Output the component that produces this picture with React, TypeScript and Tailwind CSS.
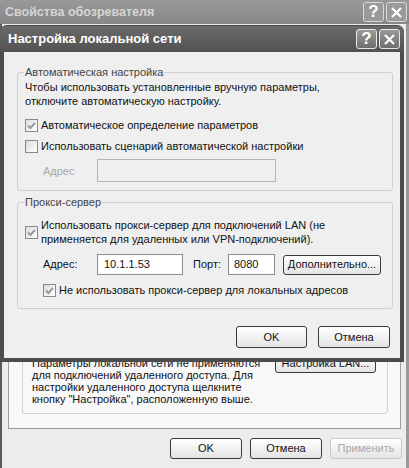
import React from 'react';

const font = { fontFamily: '"Liberation Sans", Arial, sans-serif' };

const CheckBox: React.FC<{ checked?: boolean }> = ({ checked }) => (
  <span className="w-[13px] h-[13px] shrink-0 border border-[#8a8a8a] bg-linear-to-br from-[#dcdcdc] to-white flex items-center justify-center">
    {checked && (
      <svg width="11" height="11" viewBox="0 0 11 11">
        <polyline points="2,5.5 4.4,8 9,2.8" fill="none" stroke="#9a9a9a" strokeWidth="2" />
      </svg>
    )}
  </span>
);

const Button: React.FC<{ children: React.ReactNode; className?: string; disabled?: boolean }> = ({
  children,
  className = '',
  disabled,
}) => (
  <div
    className={`flex items-center justify-center whitespace-nowrap rounded-[3px] border bg-linear-to-b from-white to-[#e4e4e4] text-[11px] ${
      disabled ? 'border-[#c8c8c8] text-[#a8a8a8]' : 'border-[#3a3a3a] text-[#111]'
    } ${className}`}
  >
    {children}
  </div>
);

const TitleButtons: React.FC<{ dim?: boolean }> = ({ dim }) => {
  const box = dim
    ? 'border-[#d8d8d8] bg-[#9a9a9a]'
    : 'border-[#e8e8e8] bg-linear-to-b from-[#9a9a9a] to-[#6e6e6e]';
  return (
    <div className="flex gap-[2px]">
      <div className={`w-[21px] h-[20px] rounded-[3px] border flex items-center justify-center text-white font-bold text-[17px] ${box}`}>
        ?
      </div>
      <div className={`w-[21px] h-[20px] rounded-[3px] border flex items-center justify-center ${box}`}>
        <svg width="13" height="13" viewBox="0 0 13 13">
          <path d="M2 2 L11 11 M11 2 L2 11" stroke="white" strokeWidth="2.2" />
        </svg>
      </div>
    </div>
  );
};

export default function App() {
  return (
    <div style={font} className="relative w-[409px] h-[468px] overflow-hidden bg-[#ececec] flex flex-col text-[#111]">
      {/* Outer window title */}
      <div className="h-[24px] shrink-0 bg-linear-to-b from-[#999] to-[#878787] flex items-center justify-between pl-[5px] pr-[2px]">
        <span className="text-[12.5px] font-bold text-[#d6d6d6]">Свойства обозревателя</span>
        <TitleButtons dim />
      </div>

      {/* Outer window body */}
      <div className="flex-1 flex flex-col border-l-[2px] border-l-[#5a5a5a] border-r-[3px] border-r-[#9a9a9a]">
        <div className="flex-1 mt-[30px] ml-[6px] mr-[5px] flex flex-col justify-end pb-[14px] bg-[#f8f8f8] border border-[#9c9c9c]">
          <div className="flex-1 ml-[13px] mr-[12px] flex flex-col justify-end border border-[#d2d2d2] rounded-[3px] pb-[8px]">
            <div className="flex items-start justify-between pl-[9px] pr-[11px]">
              <div className="pt-[4px] text-[11px] leading-[12px] whitespace-nowrap">
                <div>Параметры локальной сети не применяются</div>
                <div>для подключений удаленного доступа. Для</div>
                <div>настройки удаленного доступа щелкните</div>
                <div>кнопку "Настройка", расположенную выше.</div>
              </div>
              <Button className="w-[101px] h-[20px]">Настройка LAN...</Button>
            </div>
          </div>
        </div>
        <div className="flex justify-end gap-[8px] pt-[9px] pb-[9px] pr-[4px]">
          <Button className="w-[72px] h-[21px]">OK</Button>
          <Button className="w-[72px] h-[21px]">Отмена</Button>
          <Button className="w-[72px] h-[21px]" disabled>
            Применить
          </Button>
        </div>
      </div>

      {/* LAN settings dialog */}
      <div className="absolute left-0 top-[25px] w-[404px] rounded-t-[7px] bg-[#4c4c4c] px-[4px] pb-[4px] pt-[1px] flex flex-col">
        <div className="h-[26px] -mx-[4px] px-[4px] bg-linear-to-b from-[#6a6a6a] to-[#525252] rounded-t-[6px] flex items-center justify-between">
          <span className="pl-[4px] text-[13px] font-bold text-white">Настройка локальной сети</span>
          <TitleButtons />
        </div>
        <div className="bg-[#efefef] h-[306px] pt-[13px] pb-[10px] flex flex-col text-[11px]">
          <fieldset className="ml-[13px] w-[376px] border border-[#d0d0d0] rounded-[3px] px-[7px] pb-[8px]">
            <legend className="ml-[-1px] px-[1px] leading-[14px] text-[#444]">Автоматическая настройка</legend>
            <div className="leading-[14px] pt-[1px] whitespace-nowrap">
              <div>Чтобы использовать установленные вручную параметры,</div>
              <div>отключите автоматическую настройку.</div>
            </div>
            <div className="mt-[10px] flex items-center gap-[3px] leading-[14px]">
              <CheckBox checked />
              <span>Автоматическое определение параметров</span>
            </div>
            <div className="mt-[7px] flex items-center gap-[3px] leading-[14px]">
              <CheckBox />
              <span>Использовать сценарий автоматической настройки</span>
            </div>
            <div className="mt-[6px] flex items-center">
              <span className="w-[72px] pl-[18px] pt-[2px] text-[#a8a8a8]">Адрес</span>
              <div className="w-[179px] h-[23px] border border-[#b4b4b4] bg-[#efefef]" />
            </div>
          </fieldset>

          <fieldset className="ml-[13px] mt-[4px] w-[376px] border border-[#d0d0d0] rounded-[3px] px-[7px] pb-[11px]">
            <legend className="ml-[-1px] px-[1px] leading-[14px] text-[#444]">Прокси-сервер</legend>
            <div className="pt-[9px] flex items-center gap-[3px] leading-[14px]">
              <CheckBox checked />
              <div className="whitespace-nowrap">
                <div>Использовать прокси-сервер для подключений LAN (не</div>
                <div>применяется для удаленных или VPN-подключений).</div>
              </div>
            </div>
            <div className="mt-[8px] flex items-center">
              <span className="w-[72px] pl-[18px]">Адрес:</span>
              <div className="w-[86px] h-[21px] border border-[#8c8c8c] bg-white flex items-center pl-[6px]">10.1.1.53</div>
              <span className="ml-[10px] w-[35px]">Порт:</span>
              <div className="w-[47px] h-[21px] border border-[#8c8c8c] bg-white flex items-center pl-[5px]">8080</div>
              <Button className="ml-[8px] w-[98px] h-[20px]">Дополнительно...</Button>
            </div>
            <div className="mt-[8px] pl-[18px] flex items-center gap-[3px] leading-[14px]">
              <CheckBox checked />
              <span>Не использовать прокси-сервер для локальных адресов</span>
            </div>
          </fieldset>

          <div className="mt-auto flex justify-end gap-[11px] pr-[10px]">
            <Button className="w-[71px] h-[22px]">OK</Button>
            <Button className="w-[72px] h-[22px]">Отмена</Button>
          </div>
        </div>
      </div>
    </div>
  );
}
